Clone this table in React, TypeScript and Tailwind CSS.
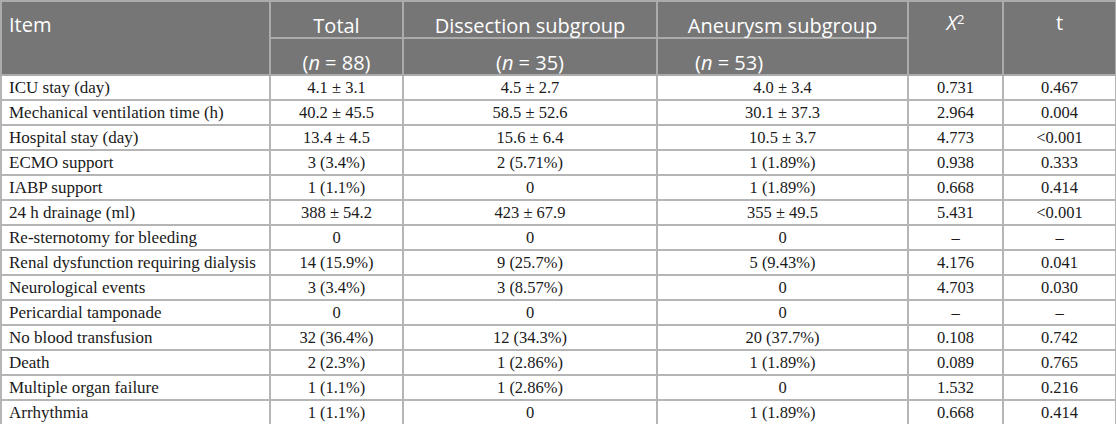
import React from 'react';

const rows: string[][] = [
  ['ICU stay (day)', '4.1 ± 3.1', '4.5 ± 2.7', '4.0 ± 3.4', '0.731', '0.467'],
  ['Mechanical ventilation time (h)', '40.2 ± 45.5', '58.5 ± 52.6', '30.1 ± 37.3', '2.964', '0.004'],
  ['Hospital stay (day)', '13.4 ± 4.5', '15.6 ± 6.4', '10.5 ± 3.7', '4.773', '<0.001'],
  ['ECMO support', '3 (3.4%)', '2 (5.71%)', '1 (1.89%)', '0.938', '0.333'],
  ['IABP support', '1 (1.1%)', '0', '1 (1.89%)', '0.668', '0.414'],
  ['24 h drainage (ml)', '388 ± 54.2', '423 ± 67.9', '355 ± 49.5', '5.431', '<0.001'],
  ['Re-sternotomy for bleeding', '0', '0', '0', '–', '–'],
  ['Renal dysfunction requiring dialysis', '14 (15.9%)', '9 (25.7%)', '5 (9.43%)', '4.176', '0.041'],
  ['Neurological events', '3 (3.4%)', '3 (8.57%)', '0', '4.703', '0.030'],
  ['Pericardial tamponade', '0', '0', '0', '–', '–'],
  ['No blood transfusion', '32 (36.4%)', '12 (34.3%)', '20 (37.7%)', '0.108', '0.742'],
  ['Death', '2 (2.3%)', '1 (2.86%)', '1 (1.89%)', '0.089', '0.765'],
  ['Multiple organ failure', '1 (1.1%)', '1 (2.86%)', '0', '1.532', '0.216'],
  ['Arrhythmia', '1 (1.1%)', '0', '1 (1.89%)', '0.668', '0.414'],
];

const th = 'border-2 border-[#ababab] font-normal px-2 leading-[20px]';
const td = 'border-2 border-[#b5b5b5] px-[7px] py-0 align-middle leading-[20px]';

export default function App() {
  return (
    <div className="bg-white w-[1116px] h-[424px] overflow-hidden">
      <table className="w-[1115px] border-collapse table-fixed text-[#1a1a1a]">
        <colgroup>
          <col className="w-[269px]" />
          <col className="w-[133px]" />
          <col className="w-[254px]" />
          <col className="w-[251px]" />
          <col className="w-[95px]" />
          <col className="w-[113px]" />
        </colgroup>
        <thead className="bg-[#767676] text-white text-[20px] font-['Open_Sans',sans-serif]">
          <tr className="h-[37px]">
            <th rowSpan={2} className={`${th} text-left align-top pt-[13px] pl-[7px]`}>Item</th>
            <th className={`${th} text-center align-bottom pb-[1px]`}>Total</th>
            <th className={`${th} text-center align-bottom pb-[1px]`}>Dissection subgroup</th>
            <th className={`${th} text-center align-bottom pb-[1px]`}>Aneurysm subgroup</th>
            <th rowSpan={2} className={`${th} text-center align-top pt-[11px]`}>
              <i>X</i>
              <sup className="text-[13px]">2</sup>
            </th>
            <th rowSpan={2} className={`${th} text-center align-top pt-[11px]`}>t</th>
          </tr>
          <tr className="h-[37px]">
            <th className={`${th} text-center align-bottom pb-[1px]`}>
              (<i>n</i> = 88)
            </th>
            <th className={`${th} text-center align-bottom pb-[1px]`}>
              (<i>n</i> = 35)
            </th>
            <th className={`${th} text-left align-bottom pb-[1px] pl-[37px]`}>
              (<i>n</i> = 53)
            </th>
          </tr>
        </thead>
        <tbody className="text-[16.5px] font-['Liberation_Serif',serif]">
          {rows.map((r) => (
            <tr key={r[0]} className="h-[25px]">
              {r.map((c, i) => (
                <td
                  key={i}
                  className={`${td} ${i === 0 ? 'text-left text-[17px]' : 'text-center'}`}
                >
                  {c}
                </td>
              ))}
            </tr>
          ))}
        </tbody>
      </table>
    </div>
  );
}
